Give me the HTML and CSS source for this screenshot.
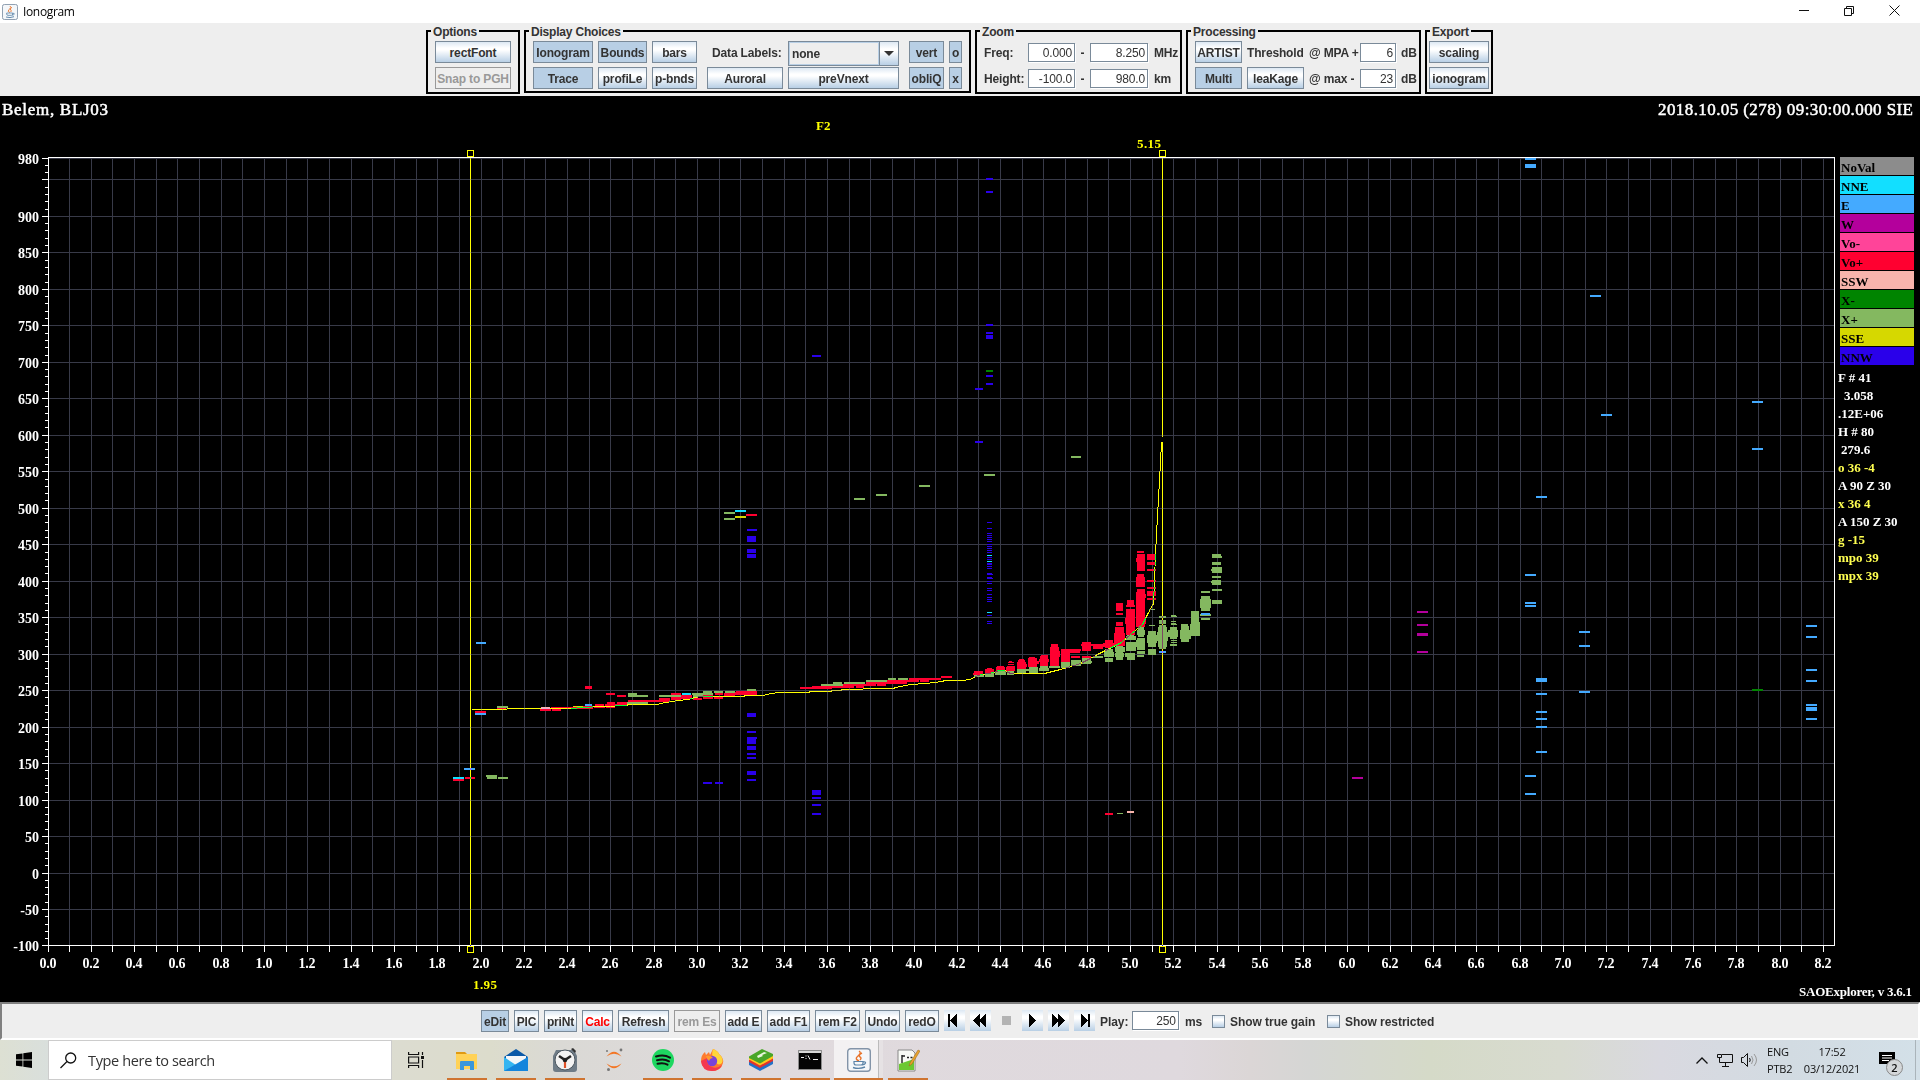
FILE: index.html
```
<!DOCTYPE html>
<html lang="en">
<head>
<meta charset="utf-8">
<title>Ionogram</title>
<link rel="stylesheet" href="styles.css">
</head>
<body>
<header class="titlebar">
  <svg class="app-icon" width="16" height="16" viewBox="0 0 24 24"><use href="#java"/></svg>
  <span class="app-name">Ionogram</span>
  <svg class="win-buttons" width="110" height="22" viewBox="0 0 110 22" fill="none" stroke="#111">
    <path d="M8 9.500h10M53.500 7.500h7v7h-7zM55.500 7.500v-2h7v7h-2M98.500 4.500l10 10M108.500 4.500l-10 10"/>
  </svg>
</header>

<nav class="toolbar">
  <section class="group options">
    <h2>Options</h2>
    <button>rectFont</button>
    <button class="off">Snap to PGH</button>
  </section>
  <section class="group display">
    <h2>Display Choices</h2>
    <button class="on">Ionogram</button><button class="on">Bounds</button><button>bars</button>
    <span class="lbl shift labels">Data Labels:</span>
    <div class="combo"><span>none</span><i><svg width="10" height="5" viewBox="0 0 10 5"><path d="M0 0h10L5 5z" fill="#333"/></svg></i></div>
    <button class="on shift">vert</button><button class="on">o</button>
    <button class="on">Trace</button><button>profiLe</button><button>p-bnds</button>
    <button class="shift">Auroral</button><button>preVnext</button>
    <button class="on shift">obliQ</button><button class="on">x</button>
  </section>
  <section class="group zoom">
    <h2>Zoom</h2>
    <span class="lbl">Freq:</span><span class="field">0.000</span><span class="lbl dash">-</span><span class="field">8.250</span><span class="lbl">MHz</span>
    <span class="lbl">Height:</span><span class="field">-100.0</span><span class="lbl dash">-</span><span class="field">980.0</span><span class="lbl">km</span>
  </section>
  <section class="group processing">
    <h2>Processing</h2>
    <button>ARTIST</button><span class="lbl">Threshold</span><span class="lbl">@ MPA +</span><span class="field">6</span><span class="lbl">dB</span>
    <button class="on">Multi</button><button>leaKage</button><span class="lbl">@ max -</span><span class="field">23</span><span class="lbl">dB</span>
  </section>
  <section class="group export">
    <h2>Export</h2>
    <button>scaling</button>
    <button>ionogram</button>
  </section>
</nav>

<main class="plot">
  <svg id="chart" class="chart" width="1920" height="906" viewBox="0 96 1920 906">
    <text class="head" x="2" y="115" textLength="106">Belem, BLJ03</text>
    <text class="head" x="1658" y="115" textLength="255">2018.10.05 (278) 09:30:00.000 SIE</text>
    <text class="mark" x="816" y="130">F2</text>
    <text class="mark" x="1137" y="148" textLength="24">5.15</text>
    <text class="mark" x="473" y="989" textLength="24">1.95</text>
    <text class="ver" x="1799" y="996" textLength="113">SAOExplorer, v 3.6.1</text>
  </svg>
  <aside class="side">
    <ul class="legend">
      <li class="noval">NoVal</li><li class="nne">NNE</li><li class="east">E</li><li class="west">W</li><li class="vom">Vo-</li><li class="vop">Vo+</li><li class="ssw">SSW</li><li class="xm">X-</li><li class="xp">X+</li><li class="sse">SSE</li><li class="nnw">NNW</li>
    </ul>
    <ul class="info">
      <li>F # 41</li><li class="in2">3.058</li><li>.12E+06</li><li>H # 80</li><li class="in1">279.6</li><li class="y">o 36 -4</li><li>A 90 Z 30</li><li class="y">x 36 4</li><li>A 150 Z 30</li><li class="y">g -15</li><li class="y">mpo 39</li><li class="y">mpx 39</li>
    </ul>
  </aside>
</main>

<footer class="controls">
  <button class="on w28">eDit</button><button class="w25">PIC</button><button class="w33">priNt</button><button class="w31 red">Calc</button><button class="w51">Refresh</button><button class="w46 off">rem Es</button><button class="w37">add E</button><button class="w43">add F1</button><button class="w45">rem F2</button><button class="w35">Undo</button><button class="w34">redO</button>
  <span class="player"><svg width="21" height="21"><path d="M4 4h2v13H4zM13 4v13l-7-6.500z"/></svg></span>
  <span class="player"><svg width="21" height="21"><path d="M10 4v13l-7-6.500zM16 4v13l-7-6.500z"/></svg></span>
  <span class="player stop"><svg width="21" height="21"><path d="M6 6h9v9H6z" fill="#b3b3b3"/></svg></span>
  <span class="player"><svg width="21" height="21"><path d="M7 4v13l7-6.500z"/></svg></span>
  <span class="player"><svg width="21" height="21"><path d="M4 4v13l7-6.500zM10 4v13l7-6.500z"/></svg></span>
  <span class="player"><svg width="21" height="21"><path d="M7 4v13l7-6.500zM14 4h2v13h-2z"/></svg></span>
  <span class="lbl play">Play:</span><span class="field w47">250</span><span class="lbl ms">ms</span>
  <span class="check"></span><span class="lbl gain">Show true gain</span>
  <span class="check"></span><span class="lbl">Show restricted</span>
</footer>

<div class="taskbar">
  <div class="start"><svg width="16" height="16" viewBox="0 0 16 16"><path d="M0 2.300L6.500 1.400V7.500H0zM7.300 1.300L16 0V7.500H7.300zM0 8.400H6.500V14.600L0 13.700zM7.300 8.400H16V16L7.300 14.700z"/></svg></div>
  <div class="search">
    <svg width="17" height="17" viewBox="0 0 17 17" fill="none" stroke="#111" stroke-width="1.300"><circle cx="10.700" cy="6" r="5"/><path d="M7 9.500L.5 16"/></svg>
    <span>Type here to search</span>
  </div>
  <div class="taskview"><svg width="16" height="16" viewBox="0 0 16 16" fill="none" stroke="#111" stroke-width="1.200"><path d="M.6 0v2.500h10V0M.6 16v-2.500h10V16M.6 5h10v6H.6zM14.500 0v3M14.500 8v8"/><path d="M13 4h3v3h-3z" fill="#111" stroke="none"/></svg></div>
  <div class="apps">
    <div class="app"><svg width="24" height="24" viewBox="0 0 24 24"><path d="M1 4h9l2 2H1z" fill="#e09a12"/><path d="M1 6h21v15H1z" fill="#ffd257"/><path d="M5 14q0-1 1-1h12q1 0 1 1v8h-4v-4H9v4H5z" fill="#3b97dc"/></svg></div>
    <div class="app"><svg width="24" height="24" viewBox="0 0 24 24"><path d="M0 9L12 1l12 8v3H0z" fill="#0a59a8"/><path d="M2 8h20v9H2z" fill="#f4f6f8"/><path d="M0 9l12 8 12-8v14H0z" fill="#35b5f1"/><path d="M0 23L24 9v14z" fill="#1585dc"/></svg></div>
    <div class="app"><svg width="24" height="24" viewBox="0 0 24 24"><path d="M3 2h18l3 6v13q0 3-3 3H3q-3 0-3-3V8z" fill="#6f7c87"/><path d="M18 1l2-1 3 3-1 2z" fill="#333"/><circle cx="12" cy="12" r="10" fill="#f3f3f3" stroke="#4c5760"/><path d="M6 8l6 4 6-4" stroke="#222" stroke-width="2.600" fill="none"/><path d="M12 12v8" stroke="#e0532a" stroke-width="2.200"/><circle cx="12" cy="12" r="2.300" fill="#222"/></svg></div>
    <div class="app idle"><svg width="24" height="24" viewBox="0 0 24 24"><path d="M4.500 8.500Q12-1 19.500 8.500 12 3 4.500 8.500zM4.500 15.500Q12 25 19.500 15.500 12 21 4.500 15.500z" fill="#f37726"/><circle cx="5" cy="3" r="1" fill="#777"/><circle cx="19" cy="2" r="1.400" fill="#777"/><circle cx="6.500" cy="21.500" r="1.500" fill="#777"/></svg></div>
    <div class="app"><svg width="24" height="24" viewBox="0 0 24 24"><circle cx="12" cy="12" r="11" fill="#1ed760"/><path d="M5 8.500q8-2.500 14 1.200M6 12.300q7-2 12 1M6.500 15.700q6-1.500 10 1" stroke="#111" stroke-width="2" fill="none" stroke-linecap="round"/></svg></div>
    <div class="app"><svg width="24" height="24" viewBox="0 0 24 24"><path d="M13 1q5 2 6 5 5 4 4 9-2 8-11 8Q2 22 1 13q0-6 4-9l1 3 3-3 1 3q2-4 3-6z" fill="#ff7a2d"/><path d="M13 1q5 2 6 5 5 4 3 9-4 4-8-3-3-5-1-11z" fill="#ffd63a"/><circle cx="12" cy="13" r="5.200" fill="#7a43d8"/><path d="M1 13q1 10 11 10 7 0 10-6-5 4-10 2-6-2-5-9z" fill="#f4374f"/><path d="M6 8q5-1 7 2-3 0-4 3-2-1-3-5z" fill="#ff9a2d"/></svg></div>
    <div class="app"><svg width="24" height="24" viewBox="0 0 24 24"><path d="M0 17l11 6 13-7v-4L0 14z" fill="#2371c9"/><path d="M0 14l11 6 13-7v-3L0 12z" fill="#e3342c"/><path d="M0 11.500l11 6 13-7V8L0 9z" fill="#ffc91e"/><path d="M0 8.500L13 1l11 5v2l-13 7.500L0 10z" fill="#49a629"/><path d="M8 8l7-4 3 1-5 2 1 1-5 2z" fill="#eaf7df"/></svg></div>
    <div class="app"><svg width="24" height="24" viewBox="0 0 24 24"><path d="M.5 2.500h23v19H.5z" fill="#050505" stroke="#8d8d8d"/><path d="M1 3h22v2H1z" fill="#d9d9d9"/><path d="M3 9.500h3M8 7.500v1M8 10v1M10 7.500l2 4M15 11.500h5" stroke="#eee"/></svg></div>
    <div class="app current"><svg width="24" height="24" viewBox="0 0 24 24"><g id="java"><rect x=".7" y=".7" width="22.600" height="22.600" rx="3" fill="#f4f7fa" stroke="#8394a8" stroke-width="1.400"/><path d="M12 3q3 2-1 5t1 5M15 5q-4 2-2 4 2 1 0 3" stroke="#e8742c" stroke-width="1.400" fill="none"/><path d="M7 13.500h9v1.500q0 2-2 2H9q-2 0-2-2zM16 14q3-.5 2.500 1T15.500 17" stroke="#5b84a8" stroke-width="1.200" fill="none"/><path d="M6 19.500q6 2 12-.5" stroke="#5b84a8" stroke-width="1.400" fill="none"/></g></svg></div>
    <div class="app"><svg width="24" height="24" viewBox="0 0 24 24"><path d="M2 2h14l3 3v18H2z" fill="#f8faf5" stroke="#888"/><path d="M3 16l15-5v11H3z" fill="#6cc832"/><path d="M6 7v8M6 8h3M11 9.500h2M14.500 9.500h2" stroke="#222" stroke-width="1.400"/><path d="M22 2l-8 13-1 3 3-2L24 3z" fill="#e9a32d" stroke="#9a6517" stroke-width=".5"/></svg></div>
  </div>
  <div class="tray">
    <svg width="12" height="7" viewBox="0 0 12 7" fill="none" stroke="#111" stroke-width="1.300"><path d="M.5 6.500L6 1l5.500 5.500"/></svg>
    <svg class="net" width="16" height="13" viewBox="0 0 16 13" fill="none" stroke="#111"><path d="M5 .5h10.500v8H2.500V4M8.500 8.500v3.500M5 12.500h7M.5.5h4v3h-4z"/></svg>
    <svg class="vol" width="17" height="14" viewBox="0 0 17 14" fill="none" stroke="#111"><path d="M.5 4.500h2l4-4v13l-4-4h-2zM8.500 5q1.500 2 0 4"/><path d="M10.500 3q3 4 0 8M13 1q5 6 0 12" stroke="#999"/></svg>
    <div class="lang"><span>ENG</span><span>PTB2</span></div>
    <div class="clock"><span>17:52</span><span>03/12/2021</span></div>
    <div class="notes"><svg width="16" height="15" viewBox="0 0 16 15"><path d="M0 0h16v12h-5v3l-3-3H0z"/><path d="M3 3.500h10M3 6h10M3 8.500h7" stroke="#fff"/></svg><b>2</b></div>
  </div>
</div>
<script src="chart.js"></script>
</body>
</html>
```
FILE: styles.css
```
* { box-sizing: border-box; }
body { margin: 0; width: 1920px; height: 1080px; overflow: hidden; background: #eee; font: bold 12px "Liberation Sans", Arial, sans-serif; color: #333; display: flex; flex-direction: column; }
ul { list-style: none; margin: 0; padding: 0; }

.titlebar { height: 23px; background: #fff; display: flex; align-items: center; padding: 0 15px 0 2px; }
.app-name { font: 12px "Open Sans", "Noto Sans", sans-serif; color: #000; margin-left: 5px; letter-spacing: -.35px; }
.win-buttons { margin-left: auto; margin-right: 4px; }

.toolbar { height: 73px; padding: 7px 0 0 426px; display: flex; align-items: flex-start; gap: 4px; }
.group { position: relative; height: 64px; border: 2px solid #000; display: grid; gap: 4px 5px; padding: 9px 0 0 7px; align-content: start; justify-content: start; grid-auto-rows: 22px; letter-spacing: -.15px; }
.group h2 { position: absolute; left: 3px; top: -8px; margin: 0; padding: 1px 2px 0; background: #eee; font-size: 12px; line-height: 14px; font-weight: bold; letter-spacing: -.2px; white-space: nowrap; }
.options { width: 94px; grid-template-columns: 76px; }
.display { width: 447px; height: 63px; grid-template-columns: 60px 49px 45px 81px 111px 40px 13px; }
.zoom { width: 207px; grid-template-columns: 39px 47px 5px 58px 26px; }
.processing { width: 235px; grid-template-columns: 47px 57px 46px 36px 18px; }
.export { width: 68px; padding-left: 2px; grid-template-columns: 60px; }

button { height: 22px; padding: 1px 0 0; margin: 0; border: 1px solid #7a8a99; border-radius: 0; background: linear-gradient(#dde8f3, #fff 30%, #fff 40%, #b8cfe5); font: inherit; letter-spacing: -.15px; color: #333; white-space: nowrap; display: flex; justify-content: center; align-items: center; }
.shift { margin-left: 5px; }
button.on { background: #b8cfe5; }
button.off { background: #eee; border-color: #999; color: #999; }
button.red { color: #f00; }
.lbl { align-self: center; white-space: nowrap; padding-top: 1px; }
.labels { padding-left: 5px; }
.field { height: 19px; align-self: center; border: 1px solid #7a8a99; box-shadow: 1px 1px 0 #fff; background: #fff; font-weight: normal; text-align: right; padding: 1px 2px 0 0; line-height: 17px; }
.combo { height: 25px; border: 1px solid #7a8a99; display: flex; }
.combo span { flex: 1; border: 1px solid #b8cfe5; padding: 4px 0 0 2px; }
.combo i { width: 19px; border-left: 1px solid #7a8a99; background: linear-gradient(#dde8f3, #fff 30%, #fff 40%, #b8cfe5); display: flex; align-items: center; justify-content: center; }
.dash { text-align: center; }
.zoom .lbl:nth-of-type(5n) { padding-left: 1px; }

.plot { height: 906px; background: #000; display: grid; grid-template-columns: 1838px 82px; }
.chart { grid-area: 1 / 1 / 2 / 3; display: block; font: bold 14px "Liberation Serif", "Times New Roman", serif; fill: #fff; }
.chart .head { font-weight: normal; font-size: 17px; stroke: #fff; stroke-width: .5px; }
.chart .mark { fill: #ff0; font-size: 13px; }
.chart .ver { font-size: 13px; }
.chart .shape { shape-rendering: crispEdges; }
.chart .bounds { mix-blend-mode: difference; stroke: #ff0; fill: none; }
.side { grid-area: 1 / 2 / 2 / 3; padding-top: 61px; font: bold 13px "Liberation Serif", "Times New Roman", serif; z-index: 1; }
.legend { width: 74px; margin-left: 2px; display: grid; gap: 1px; color: #000; }
.legend li { height: 18px; line-height: 21px; padding-left: 1px; overflow: hidden; }
.noval { background: #8c8c8c; }
.nne { background: #12dfff; }
.east { background: #44aaff; }
.west { background: #b4009c; }
.vom { background: #ff4499; }
.vop { background: #ff0030; }
.ssw { background: #f8b4ac; }
.xm { background: #008400; }
.xp { background: #84b860; }
.sse { background: #d6d800; }
.nnw { background: #2a00ea; }
.info { margin-top: 4px; color: #fff; }
.info li { height: 18.04px; line-height: 18px; white-space: nowrap; }
.info .in1 { padding-left: 3px; }
.info .in2 { padding-left: 6px; }
.info .y { color: #ffff50; }

.controls { height: 38px; border-top: 2px solid #808080; border-bottom: 2px solid #fff; border-left: 2px solid #808080; border-right: 2px solid #fff; display: flex; align-items: flex-start; gap: 5px; padding: 6px 0 0 479px; letter-spacing: -.05px; }
.controls .lbl { align-self: flex-start; line-height: 22px; }
.w25 { width: 25px; } .w28 { width: 28px; } .w31 { width: 31px; } .w33 { width: 33px; } .w34 { width: 34px; } .w35 { width: 35px; } .w37 { width: 37px; } .w43 { width: 43px; } .w45 { width: 45px; } .w46 { width: 46px; } .w47 { width: 47px; } .w51 { width: 51px; }
.player { width: 21px; height: 21px; background: linear-gradient(#dde8f3, #fff 30%, #fff 40%, #b8cfe5); }
.player svg { display: block; shape-rendering: crispEdges; }
.player.stop { background: none; }
.controls .field { align-self: flex-start; margin-top: 1px; }
.play { width: 27px; }
.ms { width: 23px; padding-left: 1px; }
.check { width: 13px; height: 13px; margin-top: 5px; border: 1px solid #7a8a99; background: linear-gradient(#dde8f3, #fff 30%, #fff 40%, #b8cfe5); }
.gain { width: 92px; }

.taskbar { height: 40px; display: flex; background: linear-gradient(90deg, #dde0d3 0, #d9dfdc 48px, #dcdcd0 400px, #dcdccc 490px, #dad9d5 560px, #e0dadd 760px, #dfd9de 1180px, #dbd6d6 1250px, #d5d6d4 1310px, #d5dac8 1430px, #d8dbd0 1560px, #d9d9e0 1660px, #d2dbe2 1790px, #d3e0e8 1920px); font: 11px "Open Sans", "Noto Sans", sans-serif; color: #111; }
.start { width: 48px; display: flex; align-items: center; justify-content: center; }
.search { width: 344px; background: #fff; border: 1px solid #ccc; display: flex; align-items: center; padding-left: 11px; gap: 11px; font-size: 14.500px; letter-spacing: -.35px; color: #333; }
.taskview { width: 50px; padding-left: 16px; display: flex; align-items: center; }
.apps { display: flex; }
.app { width: 49px; height: 40px; padding-top: 8px; display: flex; justify-content: center; align-items: flex-start; background: linear-gradient(#cf7430, #cf7430) 50% 100% / 40px 2px no-repeat; }
.app.idle { background: none; }
.app.current { background: linear-gradient(#cf7430, #cf7430) 50% 100% / 49px 2px no-repeat, linear-gradient(90deg, #f3f1f2 44px, #bbb 44px, #bbb 45px, #e6e2e4 45px); }
.tray { margin-left: auto; display: flex; align-items: center; padding-right: 4px; }
.net { margin-left: 9px; }
.vol { margin-left: 8px; }
.lang, .clock { display: flex; flex-direction: column; align-items: center; line-height: 17px; letter-spacing: -.2px; }
.lang { width: 26px; margin-left: 9px; align-items: flex-start; white-space: nowrap; }
.clock { width: 58px; margin-left: 10px; }
.notes { position: relative; width: 37px; height: 40px; margin-left: 18px; border-right: 1px solid #aab4ba; padding-top: 12px; }
.notes b { position: absolute; left: 7px; top: 19px; width: 17px; height: 17px; border-radius: 50%; border: 1px solid #888; background: #d4d7d9; text-align: center; line-height: 15px; font-size: 11px; font-weight: 600; }
```
FILE: chart.js
```
const NS = 'http://www.w3.org/2000/svg';
const chart = document.getElementById('chart');

function add(tag, attrs, text) {
  const el = document.createElementNS(NS, tag);
  for (const k in attrs) el.setAttribute(k, attrs[k]);
  if (text !== undefined) el.textContent = text;
  chart.appendChild(el);
}

const xOf = f => Math.floor(48 + f * 216.5 + 1e-6);
const yOf = h => Math.min(945, Math.floor(158 + (980 - h) * 788 / 1080));

// Grid, ticks and axis labels
let grid = '', ticks = '';
for (let i = 0; i <= 82; i++) {
  const x = xOf(i / 10);
  if (i) grid += `M${x} 158h1v787h-1z`;
  ticks += `M${x} 946h1v6h-1z`;
  if (i % 2 === 0) add('text', { x: x, y: 968, 'text-anchor': 'middle', textLength: 17 }, (i / 10).toFixed(1));
}
grid += 'M49 158h1785v1H49z';
for (let h = -100; h <= 980; h += 10) {
  const y = yOf(h), major = h % 50 === 0 || h === 980;
  ticks += major ? `M42 ${y}h6v1h-6z` : `M45 ${y}h3v1h-3z`;
  if (h % 50 === 0 && h > -100) grid += `M49 ${y}h1785v1H49z`;
  if (major && h !== 950) add('text', { x: 39, y: y + 6, 'text-anchor': 'end' }, h);
}
add('path', { class: 'shape', d: grid, fill: '#383a48', 'fill-rule': 'nonzero' });
add('path', { class: 'shape', d: ticks, fill: '#fff' });
add('path', { class: 'shape', d: 'M48 157h1787v1H48zM48 945h1787v1H48zM48 157h1v789h-1zM1834 157h1v789h-1z', fill: '#fff' });

// Echoes as x,y,w,h in plot pixels, grouped by direction colour
const echoes = [
  ['#84b860', `724,512,11,2 724,518,11,2 486,775,11,2 487,777,10,2 498,777,10,2 497,706,11,2 628,693,9,2 628,695,20,2 627,702,21,2
    659,695,22,2 692,693,21,2 693,695,10,2 703,691,9,2 714,691,9,2 725,691,10,2 747,689,9,2 821,684,22,2 833,682,9,2 844,682,21,2 854,498,11,2
    876,494,11,2 919,485,11,2 984,474,11,2 1071,456,10,2 1117,813,6,1 866,680,21,2 888,678,8,2 898,678,10,2
    974,675,10,2 985,673,9,4 995,671,11,4 1007,671,7,4 1017,669,10,2 1017,671,9,2 1029,667,9,6 1027,669,11,2 1040,666,8,5 1039,668,10,3
    1049,666,11,2 1061,662,9,6 1071,660,10,6 1082,658,9,6 1083,661,9,2 1093,656,10,2 1105,649,8,8 1104,652,10,5 1105,658,8,4
    1116,646,7,14 1115,647,10,5 1115,653,9,4 1127,635,7,5 1126,636,10,4 1126,642,10,9 1125,653,10,4 1127,657,8,3
    1138,627,6,10 1137,630,8,5 1137,638,8,12 1136,640,9,7 1137,651,8,3 1137,655,7,2 1149,609,6,1 1149,625,6,1 1148,631,8,16 1147,635,10,8 1148,649,8,6
    1159,616,7,2 1159,620,7,4 1159,625,7,24 1158,627,9,20 1157,632,11,9 1171,615,5,1 1171,616,6,1 1171,621,5,1 1171,623,5,1 1171,624,6,1
    1170,627,7,12 1168,630,10,7 1171,640,6,1 1171,642,6,1 1170,644,7,2 1181,624,7,2 1181,626,8,16 1180,630,11,9
    1191,611,8,25 1191,622,9,14 1190,624,10,7 1189,630,11,4 1201,591,9,2 1201,596,9,15 1200,599,11,9 1200,614,11,2 1201,618,9,2
    1212,554,9,4 1212,556,10,2 1212,562,9,3 1212,567,10,6 1211,569,10,2 1212,576,9,2 1212,580,9,5 1211,581,10,2 1212,589,10,2 1212,600,10,4`],
  ['#ff0030', `453,779,11,2 465,777,10,2 475,711,11,2 497,708,9,1 746,514,11,2 540,709,11,2 552,709,9,2 551,707,32,1 571,708,12,1 583,706,10,3
    585,686,7,3 595,704,9,2 594,707,11,1 606,693,9,2 617,695,9,2 607,702,8,2 605,704,22,2 606,707,9,1 617,702,10,2 628,700,42,2 659,698,11,2
    671,693,10,2 671,697,10,3 681,695,11,4 693,698,9,2 703,695,10,4 714,697,9,2 715,693,8,2 724,693,11,3 735,692,11,3 736,691,21,4
    800,687,32,2 812,686,31,2 843,684,17,2 832,686,22,2 856,686,8,2 860,684,4,4 866,682,32,2 864,684,12,2 877,684,9,2 887,680,10,4
    897,680,12,2 898,682,9,2 909,678,32,2 908,680,11,2 920,680,9,2 941,676,11,2
    974,671,9,2 973,673,10,2 987,668,5,1 985,669,9,4 997,666,7,1 996,667,9,4 1009,661,3,1 1008,662,6,1 1008,664,6,1 1007,666,8,2 1006,667,9,4
    1019,659,5,1 1018,660,7,2 1017,662,9,7 1017,664,10,3 1029,657,6,1 1028,658,9,9 1028,661,11,3 1041,655,7,2 1040,656,8,10 1039,659,10,3
    1051,644,7,3 1050,647,9,19 1051,651,9,6 1061,649,20,2 1061,649,9,13 1061,651,19,2 1071,656,9,2 1082,642,9,9 1081,644,22,2 1082,656,9,2
    1092,644,11,2 1093,646,10,3 1105,640,8,8 1103,643,11,4 1116,603,7,8 1116,613,7,2 1116,622,7,4 1115,627,9,7 1114,633,11,13
    1127,600,7,6 1126,605,9,2 1126,609,9,26 1125,618,10,6 1137,551,7,2 1137,554,8,17 1136,558,9,4 1137,574,7,3 1136,577,9,10
    1137,589,8,3 1136,592,9,35 1137,594,9,4 1137,618,9,6 1147,554,9,6 1147,562,9,3 1147,569,9,2 1147,580,9,2 1147,587,9,2 1147,591,9,5 1147,598,9,2
    1105,813,8,2`],
  ['#44aaff', `476,642,10,2 464,768,11,2 475,713,11,2 585,704,7,2 1159,651,7,2 1201,613,9,2
    1525,158,11,2 1525,164,11,4 1590,295,11,2 1601,414,11,2 1752,401,11,2 1752,448,11,2 1536,496,11,2 1525,574,11,2 1525,602,11,2 1525,605,11,2
    1579,631,11,2 1579,645,11,2 1579,691,11,2 1536,678,11,4 1536,693,11,2 1536,711,11,2 1536,718,11,2 1536,726,11,2 1536,751,11,2 1525,775,11,2 1525,793,11,2
    1806,625,11,2 1806,636,11,2 1806,669,11,2 1806,680,11,2 1806,704,11,2 1806,707,11,4 1806,718,11,2`],
  ['#2a00ea', `747,529,10,2 747,536,9,6 747,549,9,4 747,554,9,4 747,713,9,4 747,731,9,2 747,737,10,2 747,739,9,5 747,746,9,4 747,753,9,2 747,757,9,2
    747,771,9,4 747,779,9,2 703,782,9,2 715,782,8,2 812,790,9,5 812,797,9,2 812,804,9,2 812,813,9,2 812,355,9,2
    986,178,7,2 986,191,7,2 986,324,7,2 986,332,7,2 986,335,7,4 986,375,7,2 986,383,7,2 975,388,8,2 975,441,8,2 987,574,6,1 987,578,6,1 ` +
    [522, 528, 533, 535, 537, 539, 541, 544, 546, 548, 550, 552, 557, 559, 563, 564, 566, 568, 573, 577, 581, 583, 588, 590, 594, 597, 599, 601, 615, 621, 623]
      .map(y => `987,${y},5,1`).join(' ')],
  ['#12dfff', '453,777,11,2 735,510,11,2 682,693,9,2 987,555,5,1 987,561,5,1 987,612,5,1'],
  ['#b4009c', '1417,611,11,2 1417,624,11,2 1417,633,11,3 1417,651,11,2 1352,777,11,2'],
  ['#008400', '1752,689,11,2 986,370,7,2'],
  ['#d6d800', '735,516,11,2 573,706,10,1'],
  ['#f8b4ac', '541,707,9,1 1127,811,7,2'],
  ['#1c50d8', '541,708,9,1']
];
for (const [fill, list] of echoes) {
  const d = list.trim().split(/\s+/).map(r => {
    const [x, y, w, h] = r.split(',');
    return `M${x} ${y}h${w}v${h}h-${w}z`;
  }).join('');
  add('path', { class: 'shape', d, fill });
}

// Frequency bounds with their handles, and the scaled F2 trace
add('path', { class: 'shape bounds', d: 'M470.5 158V946M1162.500 158V437M1162.500 442V946' });
add('path', { class: 'shape', fill: 'none', stroke: '#ff0', d: 'M467.500 150.500h6v6h-6zM1159.500 150.500h6v6h-6zM467.500 946.500h6v6h-6zM1159.500 946.500h6v6h-6z' });
const trace = `471,709 506,709 507,708 570,708 583,707 600,706 614,706 615,705 626,705 628,704 657,704 660,703 665,702 672,701 678,700 687,699 692,698
  694,697 702,696 743,696 745,695 763,695 766,694 772,693 777,692 808,692 810,691 830,691 832,690 840,690 842,689 862,689 863,688 893,688 895,687
  910,684 926,683 942,681 944,680 961,680 970,679 975,676 981,674 994,672 998,670 1004,670 1010,673 1044,673 1060,669 1067,667 1080,663 1090,658
  1097,654 1107,649 1121,642 1130,634 1142,624 1147,614 1153,603 1154,580 1155,553 1156,534 1157,516 1158,497 1159,480 1160,461 1161,442`;
add('polyline', {
  class: 'shape bounds',
  points: trace.trim().split(/\s+/).map(p => p.split(',').map(v => +v + 0.5).join()).join(' ')
});
```
